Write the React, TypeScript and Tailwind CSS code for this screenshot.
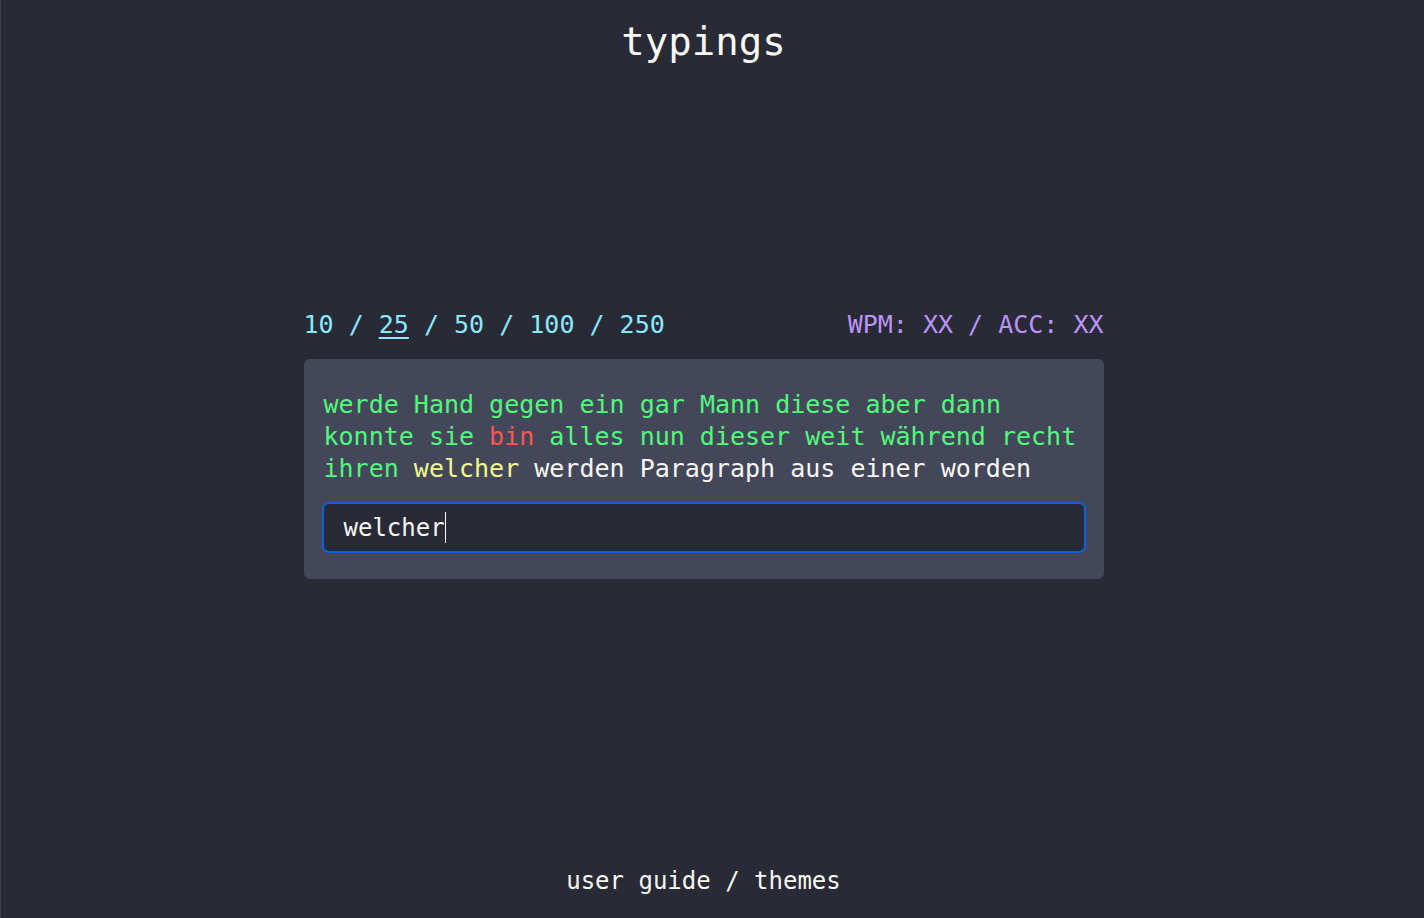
const words: { text: string; state: "correct" | "wrong" | "current" | "pending" }[] = [
	..."werde Hand gegen ein gar Mann diese aber dann konnte sie".split(" ").map(t => ({ text: t, state: "correct" as const })),
	{ text: "bin", state: "wrong" },
	..."alles nun dieser weit während recht ihren".split(" ").map(t => ({ text: t, state: "correct" as const })),
	{ text: "welcher", state: "current" },
	..."werden Paragraph aus einer worden".split(" ").map(t => ({ text: t, state: "pending" as const })),
];

const stateColor = {
	correct: "text-[#50fa7b]",
	wrong: "text-[#ff5555]",
	current: "text-[#f1fa8c]",
	pending: "text-[#f8f8f2]",
};

const counts = [10, 25, 50, 100, 250];

export default function App() {
	return (
		<div className="min-h-screen bg-[#282a36] border-l border-[#3a3d4a] pr-[18px] flex flex-col items-center text-[#f8f8f2] font-['DejaVu_Sans_Mono','Liberation_Mono',monospace]">
			<header className="pt-[19px] text-[39px] leading-[46px]">typings</header>

			<main className="mt-[244px] w-[800px]">
				<div className="flex justify-between text-[25px] leading-[32px]">
					<div className="text-[#8be9fd]">
						{counts.map((n, i) => (
							<span key={n}>
								{i > 0 && " / "}
								<span className={n === 25 ? "underline decoration-2 underline-offset-4" : ""}>{n}</span>
							</span>
						))}
					</div>
					<div className="text-[#bd93f9]">WPM: XX / ACC: XX</div>
				</div>

				<div className="mt-[18px] bg-[#44475a] rounded-md px-5 pt-[30px] pb-[28px]">
					<div className="text-[25px] leading-[32px]">
						{words.map((w, i) => (
							<span key={i}>
								<span className={stateColor[w.state]}>{w.text}</span>
								{i < words.length - 1 && " "}
							</span>
						))}
					</div>
					<div className="mt-[19px] h-[47px] bg-[#282a36] rounded-[5px] ring-2 ring-[#0b62de] flex items-center pl-5 text-[24px]">
						<span>welcher</span>
						<span className="w-px h-[31px] bg-[#f8f8f2]" />
					</div>
				</div>
			</main>

			<footer className="mt-auto pb-[21px] text-[24px] leading-[32px]">user guide / themes</footer>
		</div>
	);
}
